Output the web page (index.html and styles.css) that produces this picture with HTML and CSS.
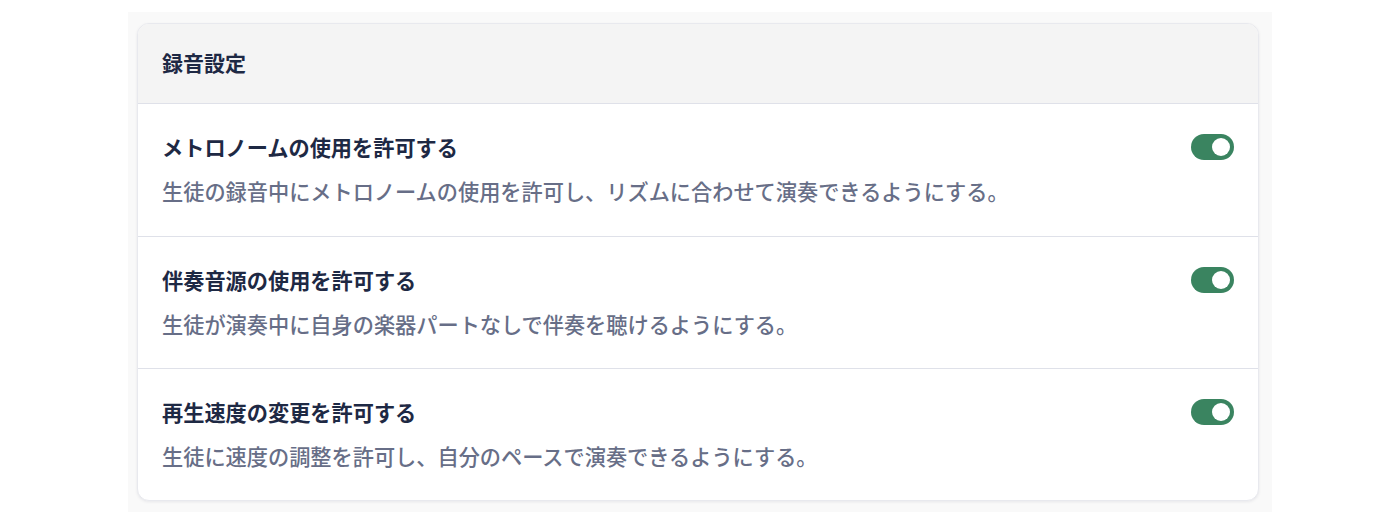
FILE: index.html
```html
<!DOCTYPE html>
<html lang="ja">
<head>
<meta charset="utf-8">
<link rel="stylesheet" href="styles.css">
</head>
<body>
<div class="wrap">
  <section class="card">
    <header class="card-head">録音設定</header>
    <div class="row">
      <div class="row-text">
        <div class="row-title">メトロノームの使用を許可する</div>
        <div class="row-desc">生徒の録音中にメトロノームの使用を許可し、リズムに合わせて演奏できるようにする。</div>
      </div>
      <span class="toggle"><span class="knob"></span></span>
    </div>
    <div class="row">
      <div class="row-text">
        <div class="row-title">伴奏音源の使用を許可する</div>
        <div class="row-desc">生徒が演奏中に自身の楽器パートなしで伴奏を聴けるようにする。</div>
      </div>
      <span class="toggle"><span class="knob"></span></span>
    </div>
    <div class="row">
      <div class="row-text">
        <div class="row-title">再生速度の変更を許可する</div>
        <div class="row-desc">生徒に速度の調整を許可し、自分のペースで演奏できるようにする。</div>
      </div>
      <span class="toggle"><span class="knob"></span></span>
    </div>
  </section>
</div>
</body>
</html>
```

FILE: styles.css
```css
html, body {
  margin: 0;
  padding: 0;
  background: #ffffff;
}
body {
  padding-top: 12px;
  font-family: "Noto Sans CJK JP", "Noto Sans", sans-serif;
}
.wrap {
  width: 1144px;
  height: 500px;
  box-sizing: border-box;
  margin: 0 auto;
  padding: 11px 13px 12px 9px;
  background: #f9f9f9;
}
.card {
  background: #ffffff;
  border: 1px solid #e8e9ee;
  border-radius: 12px;
  box-shadow: 0 1px 3px rgba(20, 30, 60, 0.08);
  overflow: hidden;
}
.card-head {
  height: 80px;
  box-sizing: border-box;
  display: flex;
  align-items: center;
  padding: 0 24px 3px;
  background: #f4f4f4;
  border-bottom: 1px solid #dfe1e9;
  color: #1e2944;
  font-size: 21px;
  font-weight: 700;
}
.row {
  display: flex;
  align-items: flex-start;
  justify-content: space-between;
  padding: 29px 24px 30px;
  height: 132px;
  box-sizing: border-box;
}
.row + .row {
  border-top: 1px solid #dfe1e9;
}
.row-title {
  color: #1e2944;
  font-size: 21.2px;
  font-weight: 700;
  line-height: 28px;
}
.row-desc {
  margin-top: 16px;
  color: #676e87;
  font-size: 21.2px;
  font-weight: 500;
  line-height: 28px;
}
.toggle {
  margin-top: 1px;
  width: 43px;
  height: 26px;
  border-radius: 13px;
  background: #3a8460;
  display: flex;
  align-items: center;
  justify-content: flex-end;
  padding-right: 4px;
  box-sizing: border-box;
}
.knob {
  width: 18px;
  height: 18px;
  border-radius: 50%;
  background: #ffffff;
}
```
